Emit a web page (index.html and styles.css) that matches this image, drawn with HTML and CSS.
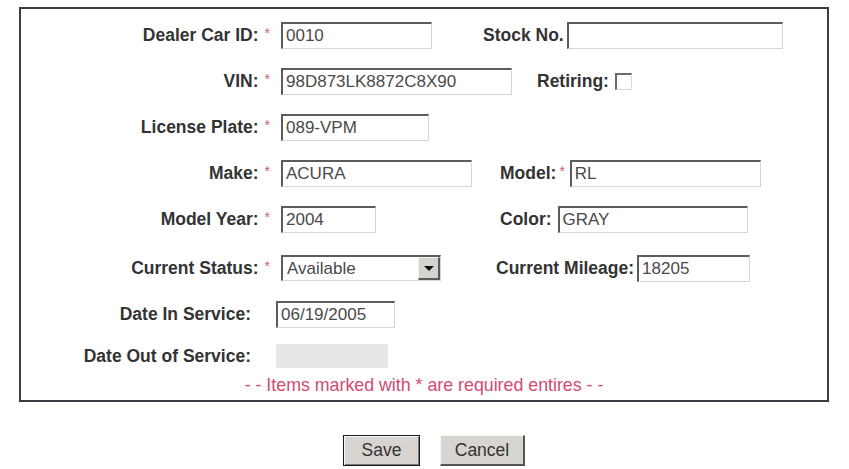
FILE: index.html
```html
<!DOCTYPE html>
<html lang="en">
<head>
    <meta charset="UTF-8">
    <meta name="viewport" content="width=device-width, initial-scale=1.0">
    <title>Vehicle Details</title>
    <link rel="stylesheet" href="styles.css">
</head>
<body>
    <form class="car-form">
        <div class="panel">
            <div class="row">
                <label class="label">Dealer Car ID:<span class="req">*</span></label>
                <div class="fields">
                    <input class="text w151" type="text" value="0010">
                    <label class="label side s-stock">Stock No.</label>
                    <input class="text w216 tight" type="text" value="">
                </div>
            </div>

            <div class="row">
                <label class="label">VIN:<span class="req">*</span></label>
                <div class="fields">
                    <input class="text w231" type="text" value="98D873LK8872C8X90">
                    <label class="label side s-retiring">Retiring:</label>
                    <input class="check" type="checkbox">
                </div>
            </div>

            <div class="row">
                <label class="label">License Plate:<span class="req">*</span></label>
                <div class="fields">
                    <input class="text w148" type="text" value="089-VPM">
                </div>
            </div>

            <div class="row">
                <label class="label">Make:<span class="req">*</span></label>
                <div class="fields">
                    <input class="text w191" type="text" value="ACURA">
                    <label class="label side s-model">Model:<span class="req">*</span></label>
                    <input class="text w191 after-req" type="text" value="RL">
                </div>
            </div>

            <div class="row">
                <label class="label">Model Year:<span class="req">*</span></label>
                <div class="fields">
                    <input class="text w95" type="text" value="2004">
                    <label class="label side s-color">Color:</label>
                    <input class="text w190 gap6" type="text" value="GRAY">
                </div>
            </div>

            <div class="row row-status">
                <label class="label">Current Status:<span class="req">*</span></label>
                <div class="fields">
                    <div class="select-wrap">
                        <select class="select">
                            <option>Available</option>
                            <option>Sold</option>
                            <option>In Service</option>
                            <option>Retired</option>
                        </select>
                        <span class="select-arrow"></span>
                    </div>
                    <label class="label side s-mileage">Current Mileage:</label>
                    <input class="text w113 tight" type="text" value="18205">
                </div>
            </div>

            <div class="row plain">
                <label class="label">Date In Service:</label>
                <div class="fields">
                    <input class="text w119" type="text" value="06/19/2005">
                </div>
            </div>

            <div class="row plain row-last">
                <label class="label">Date Out of Service:</label>
                <div class="fields">
                    <input class="text w112 disabled" type="text" value="" disabled>
                </div>
            </div>

            <p class="note">- - Items marked with * are required entires - -</p>
        </div>

        <div class="actions">
            <button type="button" class="btn btn-default">Save</button>
            <button type="button" class="btn">Cancel</button>
        </div>
    </form>
</body>
</html>
```

FILE: styles.css
```css
body {
    margin: 0;
    background: #fff;
    font-family: "Liberation Sans", Arial, sans-serif;
    color: #2b2b2b;
}
.car-form {
    margin: 7px 0 0 19px;
    width: 810px;
}
.panel {
    border: 2px solid #3c3c44;
    padding: 3px 0 5px 0;
}
.row {
    display: grid;
    grid-template-columns: 249px 1fr;
    column-gap: 11px;
    align-items: center;
    height: 46px;
}
.row-status {
    margin-top: 3px;
}
.row-last {
    height: 38px;
}
.label {
    font-size: 17.5px;
    font-weight: bold;
    color: #333;
    text-align: right;
    white-space: nowrap;
}
.req {
    color: #d65a78;
    font-size: 14px;
    font-weight: normal;
    margin-left: 6px;
    position: relative;
    top: -3px;
}
.side .req {
    margin-left: 3px;
}
.plain .label {
    padding-right: 19px;
}
.plain .text {
    margin-left: -5px;
}
.fields {
    display: flex;
    align-items: center;
}
.side {
    text-align: left;
}
.s-stock { margin-left: 51px; }
.s-retiring { margin-left: 25px; }
.s-model { margin-left: 28px; }
.s-color { margin-left: 124px; }
.s-mileage { margin-left: 55px; }

.text {
    box-sizing: border-box;
    height: 27px;
    padding: 1px 3px 0 3px;
    border-style: solid;
    border-width: 2px 1px 1px 2px;
    border-color: #5c5c5c #d6d6d6 #d6d6d6 #5c5c5c;
    background: #fff;
    font-family: "Liberation Sans", Arial, sans-serif;
    font-size: 17px;
    color: #4a4a4a;
    outline: none;
}
.tight { margin-left: 3px; }
.after-req { margin-left: 5px; }
.gap6 { margin-left: 6px; }
.w95 { width: 95px; }
.w112 { width: 112px; }
.w113 { width: 113px; }
.w119 { width: 119px; }
.w148 { width: 148px; }
.w151 { width: 151px; }
.w190 { width: 190px; }
.w191 { width: 191px; }
.w216 { width: 216px; }
.w231 { width: 231px; }

.text.disabled {
    border: none;
    height: 24px;
    background: #e6e6e6;
}

.check {
    appearance: none;
    -webkit-appearance: none;
    box-sizing: border-box;
    width: 17px;
    height: 17px;
    margin: 0 0 0 6px;
    border-style: solid;
    border-width: 2px 1px 1px 2px;
    border-color: #6a6a6a #dcdcdc #dcdcdc #6a6a6a;
    background: #fff;
}

.select-wrap {
    position: relative;
    width: 160px;
    height: 26px;
}
.select {
    appearance: none;
    -webkit-appearance: none;
    box-sizing: border-box;
    width: 100%;
    height: 100%;
    padding: 0 0 0 4px;
    border-style: solid;
    border-width: 2px 1px 1px 2px;
    border-color: #5c5c5c #d6d6d6 #d6d6d6 #5c5c5c;
    border-radius: 0;
    background: #fff;
    font-family: "Liberation Sans", Arial, sans-serif;
    font-size: 17px;
    color: #4a4a4a;
}
/* the little dropdown button drawn over the select's right end */
.select-arrow {
    position: absolute;
    top: 2px;
    right: 1px;
    bottom: 1px;
    width: 22px;
    box-sizing: border-box;
    background: #d6d3ce;
    border-style: solid;
    border-width: 1px 2px 2px 1px;
    border-color: #f4f4f4 #5a5a5a #5a5a5a #f4f4f4;
    pointer-events: none;
}
.select-arrow::after {
    content: "";
    position: absolute;
    left: 5px;
    top: 8px;
    border-left: 5px solid transparent;
    border-right: 5px solid transparent;
    border-top: 5px solid #111;
}

.note {
    margin: 0;
    height: 20px;
    line-height: 20px;
    text-align: center;
    font-size: 17.8px;
    color: #d24a73;
}

.actions {
    display: flex;
    justify-content: center;
    gap: 20px;
    margin-top: 33px;
    padding-left: 20px;
}
.btn {
    box-sizing: border-box;
    width: 85px;
    height: 31px;
    padding: 0;
    background: #d8d5d0;
    border-style: solid;
    border-width: 1px 2px 2px 1px;
    border-color: #f6f6f6 #555 #555 #f6f6f6;
    font-family: "Liberation Sans", Arial, sans-serif;
    font-size: 17.5px;
    color: #333;
}
.btn-default {
    width: 77px;
    border: 1px solid #1a1a1a;
    box-shadow: inset 1px 1px 0 #fafafa, inset -1px -1px 0 #777;
}
```
